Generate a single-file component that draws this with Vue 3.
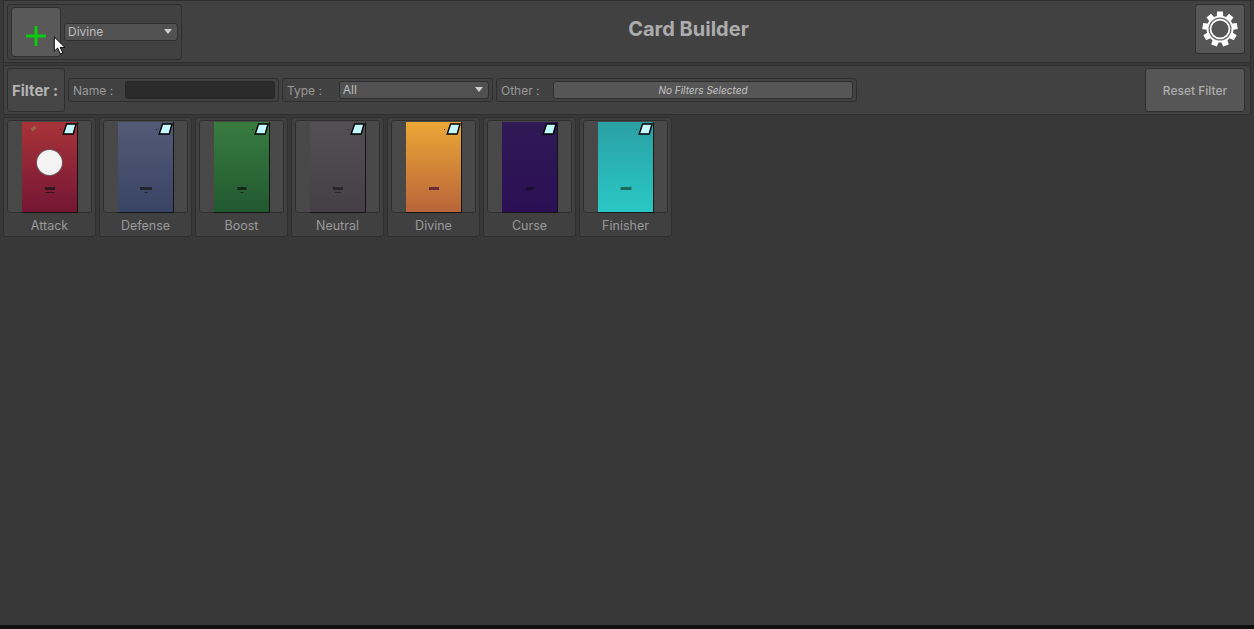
<template>
  <div class="builder">
    <div class="topbar">
      <div class="add-group">
        <button type="button" class="add-btn">
          <svg width="20" height="20" viewBox="0 0 20 20"><path d="M8.500 0h3v8.500h8.500v3h-8.500v8.500h-3v-8.500h-8.500v-3h8.500z" fill="#0ccc10" /></svg>
        </button>
        <div class="select add-select"><span>Divine</span><i class="caret"></i></div>
      </div>
      <h1 class="title">Card Builder</h1>
      <button type="button" class="gear-btn">
        <svg width="38" height="38" viewBox="0 0 38 38">
          <path :d="gearPath" fill="#fff" />
          <circle cx="19" cy="19" r="11.500" fill="#6a6a6a" />
          <circle cx="19" cy="19" r="10.300" fill="#fff" />
          <circle cx="19" cy="19" r="8.600" fill="#565656" />
        </svg>
      </button>
    </div>

    <div class="filterbar">
      <div class="filter-label">Filter :</div>
      <div class="field name-field">
        <label>Name :</label>
        <div class="name-input"></div>
      </div>
      <div class="field type-field">
        <label>Type :</label>
        <div class="select type-select"><span>All</span><i class="caret"></i></div>
      </div>
      <div class="field other-field">
        <label>Other :</label>
        <div class="other-btn">No Filters Selected</div>
      </div>
      <button type="button" class="reset-btn">Reset Filter</button>
    </div>

    <div class="cards">
      <div v-for="c in cards" :key="c.name" class="card-cell">
        <div class="slot">
          <div class="art" :style="{ background: `linear-gradient(${c.top}, ${c.bottom})` }">
            <svg class="gem" width="15" height="12" viewBox="0 0 15 12"><path d="M4.600 1h9.400l-2.800 10h-10z" fill="#c5f8fd" stroke="#000" stroke-width="1.400" /></svg>
            <i class="dot" :style="{ background: c.mark }"></i>
            <i v-if="c.circle" class="smudge"></i>
            <div v-if="c.circle" class="circle"></div>
            <div class="mark" :style="{ background: c.mark, width: c.markW + 'px' }"></div>
            <div class="mark-sub" :style="{ background: c.mark, width: c.subW + 'px' }"></div>
          </div>
        </div>
        <div class="card-name">{{ c.name }}</div>
      </div>
    </div>

    <svg class="cursor" width="14" height="19" viewBox="0 0 14 20"><path d="M1 1v15l3.500-3.300 3 6.300 2.500-1.200-2.800-5.800h5z" fill="#fff" stroke="#000" stroke-width="1" /></svg>
  </div>
</template>

<script setup>
const cards = [
  { name: 'Attack', top: '#a83339', bottom: '#741634', mark: '#2a1a1c', markW: 10, subW: 9, circle: true },
  { name: 'Defense', top: '#525a75', bottom: '#394365', mark: '#23252e', markW: 12, subW: 3 },
  { name: 'Boost', top: '#387b3f', bottom: '#215830', mark: '#14261a', markW: 9, subW: 3 },
  { name: 'Neutral', top: '#544f54', bottom: '#443f44', mark: '#2b282b', markW: 10, subW: 6 },
  { name: 'Divine', top: '#eba736', bottom: '#b9653a', mark: '#6b2c3a', markW: 10, subW: 0 },
  { name: 'Curse', top: '#2f1a55', bottom: '#2b0f55', mark: '#17102a', markW: 8, subW: 0 },
  { name: 'Finisher', top: '#2aa0a5', bottom: '#29c8c5', mark: '#1f6a5a', markW: 11, subW: 0 }
]

// nine wide teeth round the wheel
function buildGear() {
  const teeth = 9
  const step = (Math.PI * 2) / teeth
  const pts = []
  for (let i = 0; i < teeth; i++) {
    const a = i * step - Math.PI / 2
    const list = [[13.5, -0.34], [17.8, -0.24], [17.8, 0.24], [13.5, 0.34]]
    list.forEach(([r, k]) => {
      const t = a + k * step
      pts.push(`${(19 + r * Math.cos(t)).toFixed(2)} ${(19 + r * Math.sin(t)).toFixed(2)}`)
    })
  }
  return 'M' + pts.join('L') + 'Z'
}
const gearPath = buildGear()
</script>

<style>
html, body { background: #383838; }
</style>

<style scoped>
.builder {
  position: relative;
  height: 625px;
  width: 1254px;
  background: #383838;
  border-bottom: 4px solid #111;
  box-sizing: content-box;
  font-family: Inter, "Liberation Sans", sans-serif;
  color: #a8a8a8;
  overflow: hidden;
}
button { font-family: inherit; padding: 0; margin: 0; }

.topbar {
  display: flex;
  align-items: flex-start;
  box-sizing: border-box;
  height: 63px;
  padding: 3px 6px 0 4px;
  background: #414141;
  border-width: 1px 3px;
  border-style: solid;
  border-color: #2e2e2e #383838;
  box-shadow: inset 1px 0 0 #2e2e2e, inset -1px 0 0 #2e2e2e;
}
.add-group {
  display: flex;
  align-items: flex-start;
  box-sizing: border-box;
  width: 175px;
  height: 56px;
  padding: 2px 3px 0;
  gap: 3px;
  border: 1px solid #2e2e2e;
  border-radius: 3px;
}
.add-btn {
  display: flex;
  align-items: center;
  justify-content: center;
  width: 50px;
  height: 50px;
  padding-top: 8px;
  background: #595959;
  border: 1px solid #2e2e2e;
  border-radius: 3px;
}
.select {
  display: flex;
  align-items: center;
  justify-content: space-between;
  box-sizing: border-box;
  height: 18px;
  padding: 0 5px 1px 3px;
  background: #515151;
  border: 1px solid #2e2e2e;
  border-radius: 3px;
  font-size: 12px;
  color: #bdbdbd;
}
.add-select { width: 114px; margin-top: 16px; }
.caret {
  width: 0;
  height: 0;
  border-left: 4.500px solid transparent;
  border-right: 4.500px solid transparent;
  border-top: 5px solid #d0d0d0;
}
.title {
  flex: 1;
  margin: 12px 0 0;
  text-align: center;
  font-size: 20px;
  line-height: 26px;
  font-weight: 700;
  color: #acacac;
}
.gear-btn {
  display: flex;
  align-items: center;
  justify-content: center;
  width: 50px;
  height: 50px;
  background: #565656;
  border: 1px solid #2e2e2e;
  border-radius: 3px;
}

.filterbar {
  display: flex;
  align-items: center;
  box-sizing: border-box;
  height: 50px;
  margin: 2px 3px 0;
  padding: 0 5px 0 3px;
  gap: 3px;
  background: #414141;
  border: 1px solid #2e2e2e;
  border-radius: 2px;
}
.filter-label {
  display: flex;
  align-items: center;
  justify-content: center;
  box-sizing: border-box;
  width: 58px;
  height: 44px;
  padding-right: 2px;
  border: 1px solid #2e2e2e;
  border-radius: 3px;
  background: #454545;
  font-size: 15px;
  font-weight: 700;
  color: #b4b4b4;
}
.field {
  display: flex;
  align-items: center;
  box-sizing: border-box;
  height: 24px;
  padding: 0 3px 0 4px;
  border: 1px solid #2e2e2e;
  border-radius: 3px;
  font-size: 12px;
  color: #999;
}
.field label { white-space: nowrap; }
.name-field { width: 211px; }
.name-field label { width: 52px; }
.name-input {
  width: 151px;
  height: 18px;
  background: #2b2b2b;
  border: 1px solid #262626;
  border-radius: 3px;
  box-sizing: border-box;
}
.type-field { width: 211px; }
.type-field label { width: 52px; }
.type-select { width: 151px; }
.other-field { width: 361px; }
.other-field label { width: 52px; }
.other-btn {
  width: 300px;
  height: 18px;
  box-sizing: border-box;
  line-height: 16px;
  text-align: center;
  background: #565656;
  border: 1px solid #2e2e2e;
  border-radius: 3px;
  font-size: 10px;
  font-style: italic;
  color: #c4c4c4;
}
.reset-btn {
  width: 100px;
  height: 44px;
  margin-left: auto;
  background: #565656;
  border: 1px solid #2e2e2e;
  border-radius: 3px;
  font-size: 12px;
  font-weight: 500;
  color: #acacac;
}

.cards {
  display: flex;
  gap: 3px;
  padding: 2px 0 0 3px;
}
.card-cell {
  box-sizing: border-box;
  width: 93px;
  height: 120px;
  padding: 2px 3px 0;
  background: #404040;
  border: 1px solid #2e2e2e;
  border-radius: 3px;
}
.slot {
  display: flex;
  justify-content: center;
  box-sizing: border-box;
  height: 93px;
  padding: 1px 0 0 1px;
  background: #484848;
  border: 1px solid #2e2e2e;
  border-radius: 3px;
}
.art {
  position: relative;
  box-sizing: border-box;
  width: 56px;
  height: 91px;
  border-right: 1px solid #141414;
  border-bottom: 1px solid #141414;
}
.gem { position: absolute; top: 1px; right: 0; }
.dot {
  position: absolute;
  top: 7px;
  right: 16px;
  width: 1px;
  height: 1px;
}
.smudge {
  position: absolute;
  left: 9px;
  top: 5px;
  width: 5px;
  height: 3px;
  background: #9a6a48;
  transform: rotate(-35deg);
}
.circle {
  position: absolute;
  left: 15px;
  top: 28px;
  width: 25px;
  height: 25px;
  background: #f3f3f3;
  border-radius: 50%;
  box-shadow: 0 0 0 1px #6d5a5c;
}
.mark {
  position: absolute;
  left: 50%;
  top: 65px;
  height: 3px;
  transform: translateX(-50%);
}
.mark-sub {
  position: absolute;
  left: 50%;
  top: 70px;
  height: 1px;
  transform: translateX(-50%);
}
.card-name {
  height: 24px;
  line-height: 26px;
  text-align: center;
  font-size: 12.500px;
  color: #999;
}
.cursor { position: absolute; left: 53px; top: 36px; }
</style>
